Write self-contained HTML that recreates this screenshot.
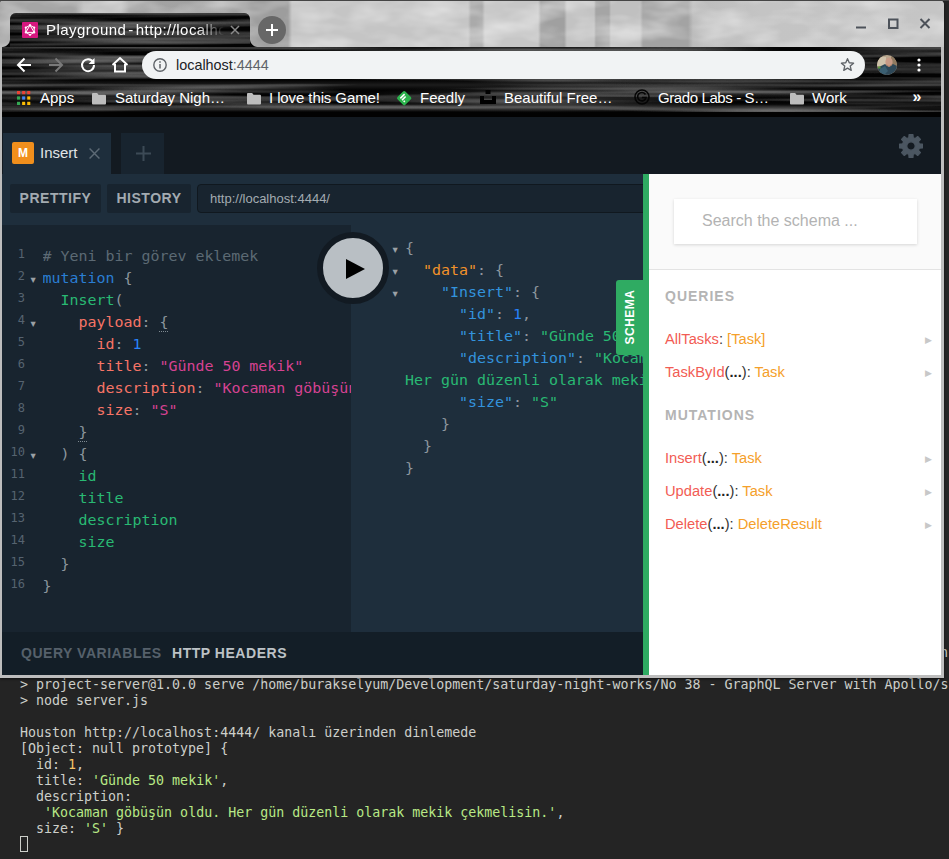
<!DOCTYPE html>
<html lang="tr">
<head>
<meta charset="utf-8">
<title>Playground - http://localhost:4444</title>
<style>
*{box-sizing:border-box;margin:0;padding:0}
html,body{width:949px;height:859px;overflow:hidden;background:#242424}
body{position:relative;font-family:"Liberation Sans",sans-serif}
.abs{position:absolute}
/* terminal */
#term{left:0;top:0;width:949px;height:859px;background:#242424}
#term pre{position:absolute;left:20px;top:677px;font:13.31px/16px "DejaVu Sans Mono","Liberation Mono",monospace;color:#cdcfca;white-space:pre}
#term .g{color:#b8e986}
#term .y{color:#f5c469}
#cursor{left:20px;top:836px;width:8px;height:16px;border:1px solid #cdcfca}
/* window */
#win{left:0;top:0;width:944px;height:677.5px;background:#bdbdbd;border-radius:4px 5px 0 0;overflow:hidden;box-shadow:0 1px 3px rgba(0,0,0,.6)}
#title{left:0;top:0;width:944px;height:47px;background:linear-gradient(90deg,rgb(165,165,165) 0px,rgb(165,165,165) 76px,rgb(188,188,188) 84px,rgb(188,188,188) 121px,rgb(163,163,163) 129px,rgb(162,162,162) 246px,rgb(157,157,157) 252px,rgb(157,157,157) 288px,rgb(197,197,197) 292px,rgb(197,197,197) 468px,rgb(170,170,170) 471px,rgb(170,170,170) 482px,rgb(199,199,199) 485px,rgb(199,199,199) 538px,rgb(160,160,160) 541px,rgb(160,160,160) 564px,rgb(195,195,195) 567px,rgb(195,195,195) 594px,rgb(165,165,165) 596px,rgb(165,165,165) 609px,rgb(192,192,192) 611px,rgb(192,192,192) 640px,rgb(163,163,163) 643px,rgb(163,163,163) 688px,rgb(188,188,188) 693px,rgb(196,196,196) 760px,rgb(197,197,197) 944px)}
#topline{left:0;top:0;width:949px;height:1px;background:#454545}
.blk{background-color:#030303;overflow:hidden}
#tab{left:10px;top:13px;width:240px;height:34px;border-radius:6px 6px 0 0}
#toolbar{left:2px;top:47px;width:939px;height:70px}

#tabfootL{left:2px;top:39px;width:8px;height:8px;background:radial-gradient(circle at 0 0,rgba(0,0,0,0) 7.5px,#050505 8.5px)}
#tabfootR{left:250px;top:39px;width:8px;height:8px;background:radial-gradient(circle at 100% 0,rgba(0,0,0,0) 7.5px,#050505 8.5px)}
.ct{color:#fff;font-size:15px;line-height:20px;white-space:nowrap}
#tabtitle{letter-spacing:.44px;word-spacing:-2.6px;left:46px;top:20px;width:180px;overflow:hidden;-webkit-mask-image:linear-gradient(90deg,#000 150px,transparent 178px);mask-image:linear-gradient(90deg,#000 150px,transparent 178px)}
#newtab{left:258px;top:15.5px;width:28px;height:28px;border-radius:50%;background:#676767}
#pill{left:142px;top:51px;width:723px;height:28px;border-radius:14px;background:#f1f3f4}
#url{left:176px;top:55px;font-size:14.4px;line-height:20px;color:#202124;white-space:nowrap}
#url span{color:#5f6368}
.bm{top:88px}
svg{position:absolute;overflow:visible}

#page{left:2px;top:113px;width:939px;height:562px;background:#131a21;overflow:hidden;clip-path:inset(4px 0 0 0)}
#page .abs{position:absolute}
#ptab{left:1px;top:20px;width:108px;height:41px;background:#1e2e3c}
#mbadge{left:10px;top:29px;width:22px;height:22px;border-radius:2px;background:#f18f1c;color:#fff;font:bold 12px/22px "Liberation Sans",sans-serif;text-align:center}
#ptabt{left:38px;top:30px;color:#e2e5e7;font-size:15px;line-height:20px}
#ptab2{left:119px;top:20px;width:43px;height:41px;background:#18242f}
#tbar{left:0;top:61px;width:939px;height:51px;background:#1e2e3c}
.btn{top:71px;height:28.5px;background:#18242f;border-radius:2px;color:#a3abb1;font:bold 14px/29px "Liberation Sans",sans-serif;letter-spacing:.53px;text-align:center;white-space:nowrap}
#urlin{left:195px;top:71px;width:500px;height:29px;background:#18242f;border:1px solid #10181f;border-radius:4px;color:#a3abb1;font-size:13px;line-height:28px;padding-left:12px}
#edL{left:0;top:112px;width:349px;height:407px;background:#18242f}
#edR{left:349px;top:112px;width:300px;height:407px;background:#1e2e3c}
#bbar{left:0;top:519px;width:939px;height:43px;background:#131e27}
#bbar span{position:absolute;top:11px;font:bold 14px/20px "Liberation Sans",sans-serif;letter-spacing:.53px;white-space:nowrap}
.code{font:14.95px/22px "DejaVu Sans Mono","Liberation Mono",monospace;white-space:pre;color:#8d979e}
#lnums{left:0;top:129.5px;width:23px;text-align:right;font:12px/22px "DejaVu Sans Mono","Liberation Mono",monospace;color:#566370;white-space:pre}
#q{left:40.5px;top:132px;width:308px;overflow:hidden}
#r{left:403px;top:124px;width:238px;overflow:hidden}
.fold{font:10.5px/22px "DejaVu Sans",sans-serif;color:#9ba1a6}
.mb{border-bottom:1px dotted #7f8a92}.c-com{color:#5c6a74}.c-kw{color:#2a7ed3}.c-prop{color:#29b973}.c-attr{color:#f77466}.c-num{color:#2882f9}.c-str{color:#d64292}.c-p{color:#7f8a92}
.r-def{color:#f2922a}.r-prop{color:#3393dc}.r-str{color:#29b973}.r-num{color:#2882f9}
#exec{left:315px;top:119px;width:72px;height:72px;border-radius:50%;background:#b9bfc4;border:6px solid #121a22}
#schematab{left:614px;top:167px;width:27px;height:75px;background:#2fab62;border-radius:3px 0 0 3px}
#schematab div{position:absolute;left:-24px;top:27px;width:75px;height:20px;transform:rotate(-90deg);color:#fff;font:bold 12px/20px "Liberation Sans",sans-serif;letter-spacing:.5px;text-align:center}
#sp{left:641px;top:61px;width:298px;height:501px;background:#fff;border-left:6px solid #2fab62}
#sph{left:0;top:0;width:292px;height:96px;background:#fafafa;border-bottom:1px solid #e3e3e3}
#sbox{left:25px;top:25px;width:243px;height:45px;background:#fff;box-shadow:0 1px 3px rgba(0,0,0,.15);color:#b3b3b3;font-size:16px;line-height:43px;padding-left:28px}
.sh{left:16px;color:#b4b4b4;font:bold 14px/20px "Liberation Sans",sans-serif;letter-spacing:1px}
.si{left:16px;font-size:14.7px;line-height:20px;white-space:nowrap;color:#333}
.si i{font-style:normal;color:#f25c54}.si b{font-weight:normal;color:#f5a02a}.si u{text-decoration:none;font-weight:bold;color:#222}
.sa{left:276px;font:9px/20px "DejaVu Sans",sans-serif;color:#c8c8c8}
</style>
</head>
<body>
<svg width="0" height="0" style="position:absolute"><defs>
<filter id="streak" x="0" y="0" width="100%" height="100%" color-interpolation-filters="sRGB">
<feTurbulence type="fractalNoise" baseFrequency="0.0035 0.16" numOctaves="2" seed="7" result="n"/>
<feColorMatrix in="n" type="matrix" values="0 0 0 0 0.42  0 0 0 0 0.42  0 0 0 0 0.42  2.6 0 0 0 -1.05"/>
</filter>
<filter id="fog" x="0" y="0" width="100%" height="100%" color-interpolation-filters="sRGB">
<feTurbulence type="fractalNoise" baseFrequency="0.02 0.05" numOctaves="3" seed="3" result="n"/>
<feColorMatrix in="n" type="matrix" values="0 0 0 0 1  0 0 0 0 1  0 0 0 0 1  0.9 0 0 0 -0.33"/>
</filter>
</defs></svg>
<div id="term" class="abs">
<pre>&gt; project-server@1.0.0 serve /home/burakselyum/Development/saturday-night-works/No 38 - GraphQL Server with Apollo/server
&gt; node server.js

Houston http://localhost:4444/ kanalı üzerinden dinlemede
[Object: null prototype] {
  id: <span class="y">1</span>,
  title: <span class="g">'Günde 50 mekik'</span>,
  description:
   <span class="g">'Kocaman göbüşün oldu. Her gün düzenli olarak mekik çekmelisin.'</span>,
  size: <span class="g">'S'</span> }</pre>
<div id="cursor" class="abs"></div>
<pre style="left:940px;top:645px">n</pre>
</div>
<div id="win" class="abs">
  <div id="title" class="abs"><svg style="left:0;top:0" width="944" height="47"><rect width="944" height="47" filter="url(#fog)"/></svg></div>
  <div id="tab" class="abs blk"><svg style="left:0;top:0" width="240" height="34"><rect width="240" height="34" filter="url(#streak)"/></svg></div>
  <div id="toolbar" class="abs blk"><svg style="left:0;top:0" width="939" height="70"><rect width="939" height="70" filter="url(#streak)"/></svg><div class="abs" style="left:0;top:56px;width:939px;height:9px;background:linear-gradient(180deg,rgba(130,130,130,0),rgba(130,130,130,.36) 45%,rgba(130,130,130,.3) 70%,rgba(130,130,130,0));-webkit-mask-image:linear-gradient(90deg,#000 0,#000 55%,rgba(0,0,0,.35) 100%);mask-image:linear-gradient(90deg,#000 0,#000 55%,rgba(0,0,0,.35) 100%)"></div><div class="abs" style="left:0;top:65px;width:939px;height:5px;background:#020202"></div><div class="abs" style="left:340px;top:38px;width:400px;height:28px;background:radial-gradient(ellipse 50% 50% at 50% 50%,rgba(140,140,140,.33),rgba(140,140,140,0))"></div><div class="abs" style="left:0;top:33px;width:939px;height:10px;background:linear-gradient(180deg,rgba(120,120,120,0),rgba(120,120,120,.22),rgba(120,120,120,0))"></div></div>
  
  <div id="tabfootL" class="abs"></div><div id="tabfootR" class="abs"></div>
  <svg style="left:22px;top:22px" width="16" height="16" viewBox="0 0 16 16"><rect width="16" height="16" rx="1" fill="#d6177f"/><g fill="none" stroke="#fff" stroke-width="1"><path d="M8 3.2 L12.2 5.6 V10.4 L8 12.8 L3.8 10.4 V5.6 Z"/><path d="M8 3.2 L12.2 10.4 H3.8 Z"/></g><g fill="#fff"><circle cx="8" cy="3.2" r="1.1"/><circle cx="12.2" cy="5.6" r="1.1"/><circle cx="12.2" cy="10.4" r="1.1"/><circle cx="8" cy="12.8" r="1.1"/><circle cx="3.8" cy="10.4" r="1.1"/><circle cx="3.8" cy="5.6" r="1.1"/></g></svg>
  <div id="tabtitle" class="abs ct">Playground - http://localhost:4444</div>
  <svg style="left:230px;top:25px" width="10" height="10" viewBox="0 0 10 10"><path d="M1 1 L9 9 M9 1 L1 9" stroke="#8a8a8a" stroke-width="1.5" fill="none"/></svg>
  <div id="newtab" class="abs"></div>
  <svg style="left:266px;top:24px" width="12" height="12" viewBox="0 0 12 12"><path d="M6 0 V12 M0 6 H12" stroke="#fff" stroke-width="2" fill="none"/></svg>
  <!-- window controls -->
  <svg style="left:856px;top:18px" width="76" height="12" viewBox="0 0 76 12"><g stroke="#4d525a" stroke-width="2" fill="none"><path d="M0 9.5 H10"/><rect x="33" y="1.5" width="8.5" height="8.5"/><path d="M64.5 1 L73.5 10 M73.5 1 L64.5 10"/></g></svg>
  <!-- nav icons -->
  <svg style="left:16px;top:57px" width="16" height="16" viewBox="0 0 16 16"><path d="M15 8 H2.5 M8.5 1.5 L2 8 L8.5 14.5" stroke="#fff" stroke-width="2" fill="none"/></svg>
  <svg style="left:48px;top:57px" width="16" height="16" viewBox="0 0 16 16"><path d="M1 8 H13.5 M7.5 1.5 L14 8 L7.5 14.5" stroke="#7a7a7a" stroke-width="2" fill="none"/></svg>
  <svg style="left:80px;top:57px" width="16" height="16" viewBox="0 0 16 16"><path d="M13.2 5.2 A6 6 0 1 0 14 8" stroke="#fff" stroke-width="2" fill="none"/><path d="M14.5 1 V7 H8.5 Z" fill="#fff"/></svg>
  <svg style="left:111px;top:56px" width="18" height="18" viewBox="0 0 18 18"><path d="M1.5 9 L9 2 L16.5 9 M4 8 V15.5 H14 V8" stroke="#fff" stroke-width="2" fill="none"/></svg>
  <div id="pill" class="abs"></div>
  <svg style="left:152px;top:57px" width="16" height="16" viewBox="0 0 16 16"><circle cx="8" cy="8" r="6.2" stroke="#5f6368" stroke-width="1.4" fill="none"/><path d="M8 7 V11.5 M8 4.3 V5.8" stroke="#5f6368" stroke-width="1.5" fill="none"/></svg>
  <div id="url" class="abs">localhost<span>:4444</span></div>
  <svg style="left:839.5px;top:57px" width="15" height="15" viewBox="0 0 18 18"><path d="M9 2 L11.1 6.9 L16.3 7.4 L12.3 10.9 L13.5 16 L9 13.3 L4.5 16 L5.7 10.9 L1.7 7.4 L6.9 6.9 Z" stroke="#5f6368" stroke-width="1.6" fill="none" stroke-linejoin="round"/></svg>
  <svg style="left:877px;top:55px" width="20" height="20" viewBox="0 0 20 20"><defs><clipPath id="avc"><circle cx="10" cy="10" r="10"/></clipPath></defs><g clip-path="url(#avc)"><rect width="20" height="20" fill="#b9a78e"/><rect x="0" y="2" width="9" height="9" fill="#cfc2ab"/><rect x="14" y="0" width="6" height="12" fill="#8f7a60"/><path d="M0 13 L4 11 L8 9 L12 12 L16 9 L20 11 V20 H0 Z" fill="#2e4858"/><path d="M3 14 L8 11 L11 16 L7 20 H3 Z" fill="#3b5f72"/><ellipse cx="12" cy="7" rx="3.6" ry="4.6" fill="#c79a86"/><path d="M9.2 8.5 Q12 13.5 14.8 8.5 L14 10.5 Q12 12.8 10 10.5 Z" fill="#a56b4e"/><rect x="1" y="11.5" width="2.5" height="2" fill="#5f9a3c"/></g></svg>
  <svg style="left:917px;top:58px" width="4" height="14" viewBox="0 0 4 14"><circle cx="2" cy="2" r="1.6" fill="#fff"/><circle cx="2" cy="7" r="1.6" fill="#fff"/><circle cx="2" cy="12" r="1.6" fill="#fff"/></svg>
  <!-- bookmarks -->
  <svg style="left:17px;top:90.7px" width="13.3" height="14" viewBox="0 0 13 13" preserveAspectRatio="none"><rect x="0" y="0" width="3" height="3" fill="#ea4335"/><rect x="5" y="0" width="3" height="3" fill="#ea4335"/><rect x="10" y="0" width="3" height="3" fill="#ea4335"/><rect x="0" y="5" width="3" height="3" fill="#34a853"/><rect x="5" y="5" width="3" height="3" fill="#4285f4"/><rect x="10" y="5" width="3" height="3" fill="#fbbc05"/><rect x="0" y="10" width="3" height="3" fill="#34a853"/><rect x="5" y="10" width="3" height="3" fill="#fbbc05"/><rect x="10" y="10" width="3" height="3" fill="#fbbc05"/></svg>
  <div class="abs ct bm" style="left:40px">Apps</div>
  <svg style="left:91.5px;top:92.5px" width="14" height="11.5" viewBox="0 0 15 12" preserveAspectRatio="none"><path d="M1 0 H5.5 L7 1.8 H14 a1 1 0 0 1 1 1 V11 a1 1 0 0 1 -1 1 H1 a1 1 0 0 1 -1 -1 V1 a1 1 0 0 1 1 -1 Z" fill="#bdbdbd"/></svg>
  <div class="abs ct bm" style="left:115px">Saturday Nigh…</div>
  <svg style="left:246.5px;top:92.5px" width="14" height="11.5" viewBox="0 0 15 12" preserveAspectRatio="none"><path d="M1 0 H5.5 L7 1.8 H14 a1 1 0 0 1 1 1 V11 a1 1 0 0 1 -1 1 H1 a1 1 0 0 1 -1 -1 V1 a1 1 0 0 1 1 -1 Z" fill="#bdbdbd"/></svg>
  <div class="abs ct bm" style="left:269px;letter-spacing:-.1px">I love this Game!</div>
  <svg style="left:395.8px;top:89.8px" width="16.4" height="16.4" viewBox="0 0 16 16"><rect x="2.6" y="2.6" width="10.8" height="10.8" rx="1.6" transform="rotate(45 8 8)" fill="#2bb24c"/><path d="M4.2 8.2 L8.4 4 M5.9 9.9 L9.4 6.4 M7.5 11.6 L8.6 10.5" stroke="#fff" stroke-width="1.5" fill="none"/></svg>
  <div class="abs ct bm" style="left:420px">Feedly</div>
  <svg style="left:480px;top:90px" width="16" height="15" viewBox="0 0 16 15"><g fill="#000"><rect x="5.5" y="0" width="5" height="4"/><rect x="0" y="6" width="4" height="8"/><rect x="4" y="10" width="8" height="4"/><rect x="12" y="6" width="4" height="8"/></g></svg>
  <div class="abs ct bm" style="left:504px">Beautiful Free…</div>
  <svg style="left:634px;top:89px" width="16" height="16" viewBox="0 0 16 16"><circle cx="8" cy="8" r="7" stroke="#050505" stroke-width="1.6" fill="none"/><path d="M11.5 5.5 A4.2 4.2 0 1 0 12 8.5 H8" stroke="#050505" stroke-width="1.6" fill="none"/></svg>
  <div class="abs ct bm" style="left:658px;letter-spacing:-.4px">Grado Labs - S…</div>
  <svg style="left:789.5px;top:92.5px" width="14" height="11.5" viewBox="0 0 15 12" preserveAspectRatio="none"><path d="M1 0 H5.5 L7 1.8 H14 a1 1 0 0 1 1 1 V11 a1 1 0 0 1 -1 1 H1 a1 1 0 0 1 -1 -1 V1 a1 1 0 0 1 1 -1 Z" fill="#bdbdbd"/></svg>
  <div class="abs ct bm" style="left:812px">Work</div>
  <div class="abs ct bm" style="left:912.5px;font-size:16px;top:87px;font-weight:bold">»</div>

  
  <div id="page" class="abs">
    <div id="ptab" class="abs"></div>
    <div id="mbadge" class="abs">M</div>
    <div id="ptabt" class="abs">Insert</div>
    <svg style="left:86.5px;top:35px" width="11" height="11" viewBox="0 0 10 10"><path d="M0.5 0.5 L9.5 9.5 M9.5 0.5 L0.5 9.5" stroke="#5d6a75" stroke-width="1.3" fill="none"/></svg>
    <div id="ptab2" class="abs"></div>
    <svg style="left:133.5px;top:33px" width="15" height="15" viewBox="0 0 15 15"><path d="M7.5 0 V15 M0 7.5 H15" stroke="#3c4a56" stroke-width="2" fill="none"/></svg>
    <svg style="left:908.7px;top:32.7px" width="1" height="1" viewBox="0 0 1 1"><path fill="#4b5661" fill-rule="evenodd" stroke="#4b5661" stroke-width="1.2" stroke-linejoin="round" d="M8.31 -2.21 L11.43 -1.96 L11.43 1.96 L8.31 2.21 L7.44 4.31 L9.47 6.70 L6.70 9.47 L4.31 7.44 L2.21 8.31 L1.96 11.43 L-1.96 11.43 L-2.21 8.31 L-4.31 7.44 L-6.70 9.47 L-9.47 6.70 L-7.44 4.31 L-8.31 2.21 L-11.43 1.96 L-11.43 -1.96 L-8.31 -2.21 L-7.44 -4.31 L-9.47 -6.70 L-6.70 -9.47 L-4.31 -7.44 L-2.21 -8.31 L-1.96 -11.43 L1.96 -11.43 L2.21 -8.31 L4.31 -7.44 L6.70 -9.47 L9.47 -6.70 L7.44 -4.31 Z M4.20 0 A4.20 4.20 0 1 0 -4.20 0 A4.20 4.20 0 1 0 4.20 0 Z"/></svg>
    <div id="tbar" class="abs"></div>
    <div class="abs btn" style="left:8px;width:91px">PRETTIFY</div>
    <div class="abs btn" style="left:105px;width:84px">HISTORY</div>
    <div id="urlin" class="abs">http://localhost:4444/</div>
    <div id="edL" class="abs"></div>
    <div id="edR" class="abs"></div>
    <div id="lnums" class="abs">1
2
3
4
5
6
7
8
9
10
11
12
13
14
15
16</div>
    <div class="abs fold" style="left:28.5px;top:155px">▾</div>
    <div class="abs fold" style="left:28.5px;top:199px">▾</div>
    <div class="abs fold" style="left:28.5px;top:331px">▾</div>
    <div id="q" class="abs code"><span class="c-com"># Yeni bir görev eklemek</span>
<span class="c-kw">mutation</span> {
  <span class="c-prop">Insert</span>(
    <span class="c-attr">payload</span>: <span class="mb">{</span>
      <span class="c-attr">id</span>: <span class="c-num">1</span>
      <span class="c-attr">title</span>: <span class="c-str">"Günde 50 mekik"</span>
      <span class="c-attr">description</span>: <span class="c-str">"Kocaman göbüşün oldu. Her gün düzenli olarak mekik çekmelisin."</span>
      <span class="c-attr">size</span>: <span class="c-str">"S"</span>
    <span class="mb">}</span>
  ) {
    <span class="c-prop">id</span>
    <span class="c-prop">title</span>
    <span class="c-prop">description</span>
    <span class="c-prop">size</span>
  }
}</div>
    <div class="abs fold" style="left:390.5px;top:125px">▾</div>
    <div class="abs fold" style="left:390.5px;top:147px">▾</div>
    <div class="abs fold" style="left:390.5px;top:169px">▾</div>
    <div id="r" class="abs code">{
  <span class="r-def">"data"</span>: {
    <span class="r-prop">"Insert"</span>: {
      <span class="r-prop">"id"</span>: <span class="r-num">1</span>,
      <span class="r-prop">"title"</span>: <span class="r-str">"Günde 50 mekik"</span>,
      <span class="r-prop">"description"</span>: <span class="r-str">"Kocaman göbüşün oldu.</span>
<span class="r-str">Her gün düzenli olarak mekik çekmelisin."</span>,
      <span class="r-prop">"size"</span>: <span class="r-str">"S"</span>
    }
  }
}</div>
    <div id="exec" class="abs"></div>
    <svg style="left:344px;top:146px" width="19" height="20" viewBox="0 0 19 20"><path d="M0 0 L19 10 L0 20 Z" fill="#000"/></svg>
    <div id="bbar" class="abs"><span style="left:19px;color:#56616b">QUERY VARIABLES</span><span style="left:170px;color:#bcc2c6">HTTP HEADERS</span></div>
    <div id="schematab" class="abs"><div>SCHEMA</div></div>
    <div id="sp" class="abs">
      <div id="sph" class="abs"></div>
      <div id="sbox" class="abs">Search the schema ...</div>
      <div class="abs sh" style="top:112px">QUERIES</div>
      <div class="abs si" style="top:155px"><i>AllTasks</i>: <b>[Task]</b></div>
      <div class="abs sa" style="top:156px">▶</div>
      <div class="abs si" style="top:188px"><i>TaskById</i>(<u>...</u>): <b>Task</b></div>
      <div class="abs sa" style="top:189px">▶</div>
      <div class="abs sh" style="top:231px">MUTATIONS</div>
      <div class="abs si" style="top:274px"><i>Insert</i>(<u>...</u>): <b>Task</b></div>
      <div class="abs sa" style="top:275px">▶</div>
      <div class="abs si" style="top:307px"><i>Update</i>(<u>...</u>): <b>Task</b></div>
      <div class="abs sa" style="top:308px">▶</div>
      <div class="abs si" style="top:340px"><i>Delete</i>(<u>...</u>): <b>DeleteResult</b></div>
      <div class="abs sa" style="top:341px">▶</div>
    </div>
  </div>

</div>
<div id="topline" class="abs"></div>
</body>
</html>
